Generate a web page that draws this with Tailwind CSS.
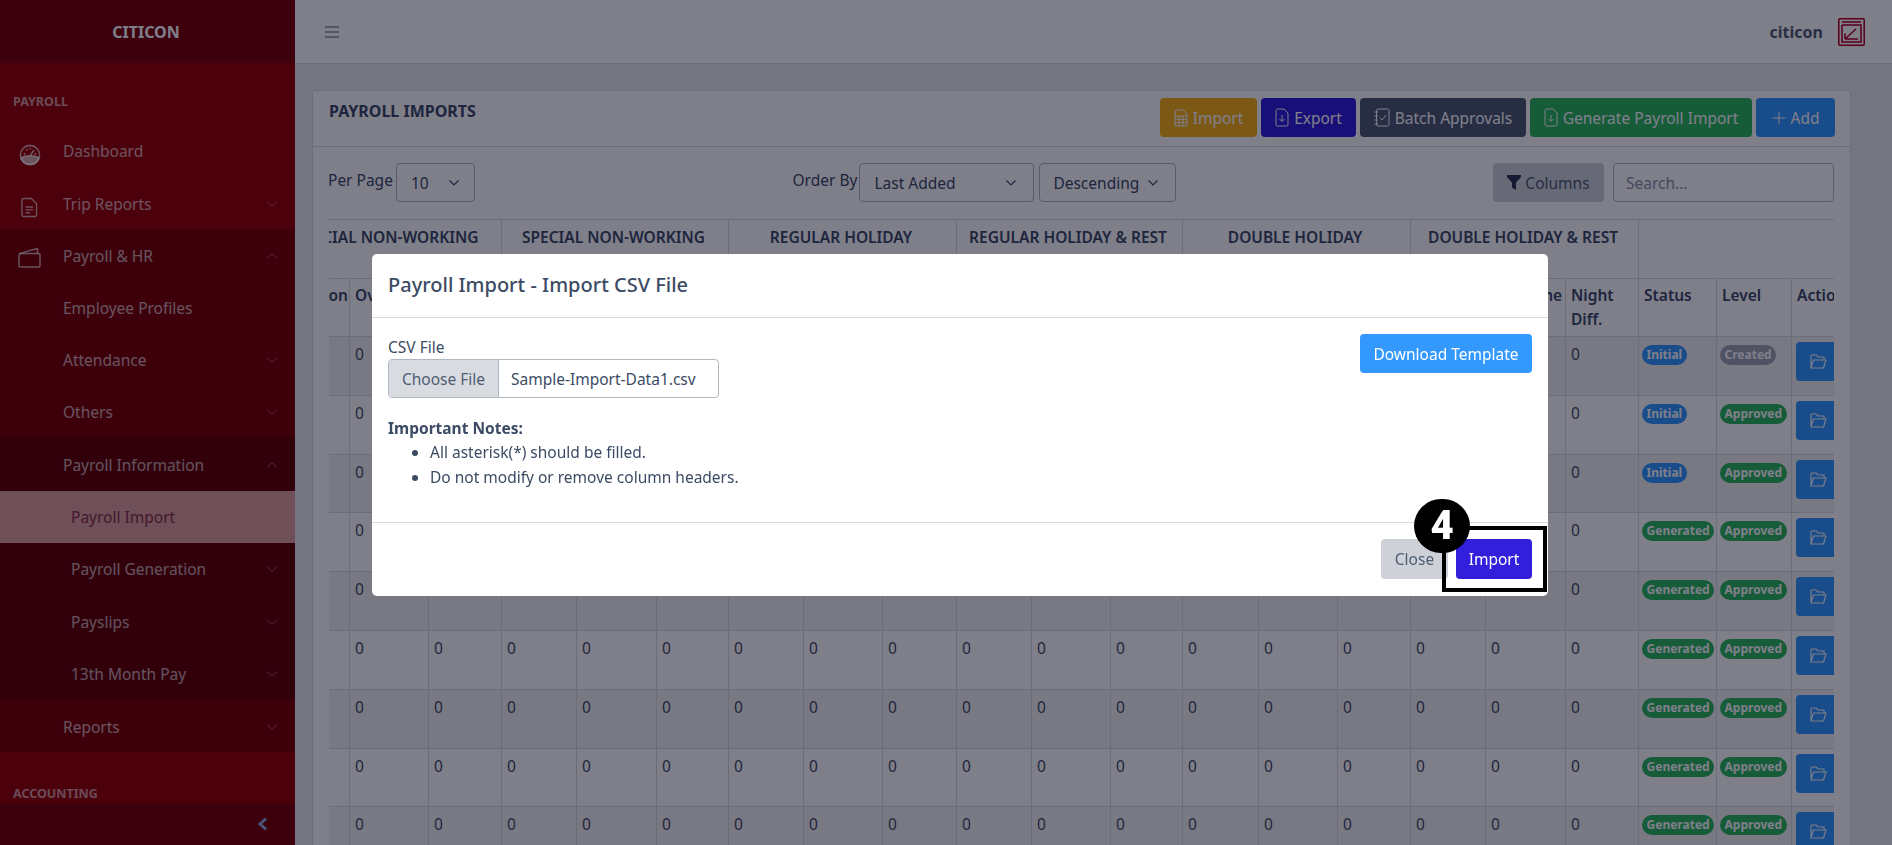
<!DOCTYPE html>
<html lang="en">
<head>
<meta charset="utf-8">
<title>Payroll Imports</title>
<script src="https://cdn.jsdelivr.net/npm/@tailwindcss/browser@4"></script>
</head>
<body class="font-['Noto_Sans',sans-serif] text-[15.5px] leading-6 text-[#3c4b64] bg-[#ebedef] overflow-hidden">
<div class="flex h-[845px] w-[1892px] overflow-hidden">

  <!-- Sidebar -->
  <aside class="w-[295px] shrink-0 h-full flex flex-col bg-[#990000] text-white/65">
    <div class="h-[63px] shrink-0 bg-[#7a0004] flex items-center justify-center pr-[3px] text-white font-bold text-[16px]">CITICON</div>
    <nav class="flex-1 overflow-hidden flex flex-col">
      <div class="mt-4 h-[45.7px] shrink-0 pl-[13px] flex items-center text-[12.5px] font-bold text-white/60">PAYROLL</div>
      <a class="h-[52.3px] shrink-0 flex items-center">
        <span class="w-[63px] flex justify-center pr-[4px] pt-[8px]"><svg width="22" height="22" viewBox="0 0 22 22" fill="none" stroke="currentColor" stroke-width="1.6"><circle cx="11" cy="11" r="9.6"/><path d="M2 14 C5 11 17 11 20 14 C18.5 18.5 15 20.5 11 20.5 C7 20.5 3.5 18.5 2 14Z" fill="currentColor"/><path d="M11 12 L15 6 M4.8 9.5 L6.5 10.4 M7.5 5 L8.4 6.6 M11 3.8 V5.6 M17.2 9.5 L15.5 10.4"/></svg></span>
        <span>Dashboard</span>
      </a>
      <a class="h-[52.3px] shrink-0 flex items-center pt-px">
        <span class="w-[63px] flex justify-center pr-[4px] pt-[8px]"><svg width="17" height="21" viewBox="0 0 18 22" fill="none" stroke="currentColor" stroke-width="1.5"><path d="M2.5 1.5 H11 L16.5 7 V19 a1.5 1.5 0 0 1 -1.5 1.5 H2.5 A1.5 1.5 0 0 1 1 19 V3 A1.5 1.5 0 0 1 2.5 1.5Z"/><path d="M5 10.5 H13 M5 13.5 H13 M5 16.5 H9.5"/></svg></span>
        <span class="flex-1">Trip Reports</span>
        <svg class="mr-[17px]" width="12" height="12" viewBox="0 0 12 12" fill="none" stroke="currentColor" stroke-width="0.9" opacity="0.6"><path d="M1 3.8 L6 8.2 L11 3.8"/></svg>
      </a>
      <div class="bg-[#7a0000] shrink-0">
        <a class="h-[52.3px] flex items-center pt-px">
          <span class="w-[63px] flex justify-center pr-[4px] pt-[5px]"><svg width="23" height="20" viewBox="0 0 23 20" fill="none" stroke="currentColor" stroke-width="1.5"><rect x="1" y="5.5" width="21" height="13.5" rx="1.5"/><path d="M1.5 6 C8 3.5 15 1.5 19.5 0.8 V5.5"/></svg></span>
          <span class="flex-1">Payroll &amp; HR</span>
          <svg class="mr-[17px]" width="12" height="12" viewBox="0 0 12 12" fill="none" stroke="currentColor" stroke-width="0.9" opacity="0.6"><path d="M1 8.2 L6 3.8 L11 8.2"/></svg>
        </a>
        <a class="h-[52.3px] flex items-center pl-[63px]">Employee Profiles</a>
        <a class="h-[52.3px] flex items-center pl-[63px]">
          <span class="flex-1">Attendance</span>
          <svg class="mr-[17px]" width="12" height="12" viewBox="0 0 12 12" fill="none" stroke="currentColor" stroke-width="0.9" opacity="0.6"><path d="M1 3.8 L6 8.2 L11 3.8"/></svg>
        </a>
        <a class="h-[52.3px] flex items-center pl-[63px]">
          <span class="flex-1">Others</span>
          <svg class="mr-[17px]" width="12" height="12" viewBox="0 0 12 12" fill="none" stroke="currentColor" stroke-width="0.9" opacity="0.6"><path d="M1 3.8 L6 8.2 L11 3.8"/></svg>
        </a>
        <div class="bg-[#620000]">
          <a class="h-[52.3px] flex items-center pl-[63px]">
            <span class="flex-1">Payroll Information</span>
            <svg class="mr-[17px]" width="12" height="12" viewBox="0 0 12 12" fill="none" stroke="currentColor" stroke-width="0.9" opacity="0.6"><path d="M1 8.2 L6 3.8 L11 8.2"/></svg>
          </a>
          <a class="h-[52.3px] flex items-center pl-[71px] bg-[#de9e9a] text-[#8a3048]">Payroll Import</a>
          <a class="h-[52.3px] flex items-center pl-[71px]">
            <span class="flex-1">Payroll Generation</span>
            <svg class="mr-[17px]" width="12" height="12" viewBox="0 0 12 12" fill="none" stroke="currentColor" stroke-width="0.9" opacity="0.6"><path d="M1 3.8 L6 8.2 L11 3.8"/></svg>
          </a>
          <a class="h-[52.3px] flex items-center pl-[71px]">
            <span class="flex-1">Payslips</span>
            <svg class="mr-[17px]" width="12" height="12" viewBox="0 0 12 12" fill="none" stroke="currentColor" stroke-width="0.9" opacity="0.6"><path d="M1 3.8 L6 8.2 L11 3.8"/></svg>
          </a>
          <a class="h-[52.3px] flex items-center pl-[71px]">
            <span class="flex-1">13th Month Pay</span>
            <svg class="mr-[17px]" width="12" height="12" viewBox="0 0 12 12" fill="none" stroke="currentColor" stroke-width="0.9" opacity="0.6"><path d="M1 3.8 L6 8.2 L11 3.8"/></svg>
          </a>
        </div>
        <a class="h-[52.3px] flex items-center pl-[63px] pt-px">
          <span class="flex-1">Reports</span>
          <svg class="mr-[17px]" width="12" height="12" viewBox="0 0 12 12" fill="none" stroke="currentColor" stroke-width="0.9" opacity="0.6"><path d="M1 3.8 L6 8.2 L11 3.8"/></svg>
        </a>
      </div>
      <div class="mt-4 h-[51px] shrink-0 pl-[13px] flex items-center text-[12.5px] font-bold text-white/60">ACCOUNTING</div>
    </nav>
    <div class="h-[42px] shrink-0 bg-[#7a0004] flex items-center justify-end pr-[26px] text-[#8fa8d8]">
      <svg width="12" height="14" viewBox="0 0 12 14" fill="none" stroke="currentColor" stroke-width="3"><path d="M9 1.5 L3 7 L9 12.5"/></svg>
    </div>
  </aside>

  <!-- Main -->
  <div class="flex-1 min-w-0 flex flex-col">
    <header class="h-[64px] shrink-0 bg-white border-b border-[#d8dbe0] flex items-center pl-[29px] pr-[27px]">
      <svg width="16" height="14" viewBox="0 0 16 14" fill="none" stroke="#4f5d73" stroke-width="1.2"><path d="M1 2 H15 M1 7 H15 M1 12 H15"/></svg>
      <div class="ml-auto flex items-center gap-[15px]">
        <span class="font-bold text-[16px] text-[#4f5d73]">citicon</span>
        <svg width="27" height="28" viewBox="0 0 27 28" fill="none" stroke="#b00020" stroke-width="1.5"><rect x="0.8" y="0.8" width="25.4" height="26.4" rx="1"/><path d="M4 4 H23 M4 7 H23 V24 H4 V7 M7 21 L18 11 M7 21 V15.5 M7 21 H20" /></svg>
      </div>
    </header>

    <main class="flex-1 min-h-0 pl-[17px] pr-[41px] pt-[26px]">
      <section class="bg-white border border-[#d8dbe0] rounded-[4px] h-[800px]">
        <div class="h-[56px] border-b border-[#d8dbe0] px-4 flex justify-between items-start">
          <h2 class="font-bold text-[16px] mt-[8px] text-[#3c4b64]">PAYROLL IMPORTS</h2>
          <div class="flex gap-1 mt-[7px] mr-[-1px] text-white">
            <button class="h-[39px] w-[97px] rounded-[4px] bg-[#f9b115] flex items-center justify-center gap-[5px]">
              <svg width="14" height="18" viewBox="0 0 14 18" fill="none" stroke="currentColor" stroke-width="1"><path d="M1 7 V3 A2 2 0 0 1 3 1 H9 L13 5 V7 M1 7 H13 V17 H1 Z M1 10.3 H13 M1 13.6 H13 M5 7 V17 M9 7 V17"/></svg>Import</button>
            <button class="h-[39px] w-[95px] rounded-[4px] bg-[#321fdb] flex items-center justify-center gap-[5px]">
              <svg width="14" height="19" viewBox="0 0 14 19" fill="none" stroke="currentColor" stroke-width="1"><path d="M2.5 1 H9 L13 5 V16.5 A1.5 1.5 0 0 1 11.5 18 H2.5 A1.5 1.5 0 0 1 1 16.5 V2.5 A1.5 1.5 0 0 1 2.5 1Z M7 7 V13 M4.5 11 L7 13.5 L9.5 11"/></svg>Export</button>
            <button class="h-[39px] w-[166px] rounded-[4px] bg-[#4f5d73] flex items-center justify-center gap-[5px]">
              <svg width="16" height="19" viewBox="0 0 16 19" fill="none" stroke="currentColor" stroke-width="1"><rect x="2.5" y="1" width="12.5" height="17" rx="1.5"/><path d="M0.5 4 H4 M0.5 8 H4 M0.5 12 H4 M0.5 16 H4 M6 9.5 L8.2 12 L12 7"/></svg>Batch Approvals</button>
            <button class="h-[39px] w-[222px] rounded-[4px] bg-[#2eb85c] flex items-center justify-center gap-[5px]">
              <svg width="14" height="19" viewBox="0 0 14 19" fill="none" stroke="currentColor" stroke-width="1"><path d="M2.5 1 H9 L13 5 V16.5 A1.5 1.5 0 0 1 11.5 18 H2.5 A1.5 1.5 0 0 1 1 16.5 V2.5 A1.5 1.5 0 0 1 2.5 1Z M7 7 V13 M4.5 11 L7 13.5 L9.5 11"/></svg>Generate Payroll Import</button>
            <button class="h-[39px] w-[79px] rounded-[4px] bg-[#3399ff] flex items-center justify-center gap-[5px]">
              <svg width="14" height="14" viewBox="0 0 14 14" fill="none" stroke="currentColor" stroke-width="1"><path d="M7 0.5 V13.5 M0.5 7 H13.5"/></svg>Add</button>
          </div>
        </div>

        <div class="px-4 pt-[16px]">
          <div class="flex justify-between items-start h-[39px]">
            <div class="flex items-center gap-[3px]">
              <span class="pb-[5px] ml-[-1px]">Per Page</span>
              <div class="h-[39px] w-[79px] border border-[#b1b7c1] rounded-[4px] flex items-center justify-between pl-[14px] pr-[14px] bg-white">
                <span>10</span>
                <svg width="12" height="8" viewBox="0 0 12 8" fill="none" stroke="#3c4b64" stroke-width="1.2"><path d="M1.5 1.5 L6 6 L10.5 1.5"/></svg>
              </div>
            </div>
            <div class="flex items-center gap-[5px] ml-[1px]">
              <span class="pb-[5px] mr-[-3px]">Order By</span>
              <div class="h-[39px] w-[175px] border border-[#b1b7c1] rounded-[4px] flex items-center justify-between pl-[14px] pr-[16px] bg-white">
                <span>Last Added</span>
                <svg width="12" height="8" viewBox="0 0 12 8" fill="none" stroke="#3c4b64" stroke-width="1.2"><path d="M1.5 1.5 L6 6 L10.5 1.5"/></svg>
              </div>
              <div class="h-[39px] w-[137px] border border-[#b1b7c1] rounded-[4px] flex items-center justify-between pl-[13px] pr-[16px] bg-white">
                <span>Descending</span>
                <svg width="12" height="8" viewBox="0 0 12 8" fill="none" stroke="#3c4b64" stroke-width="1.2"><path d="M1.5 1.5 L6 6 L10.5 1.5"/></svg>
              </div>
            </div>
            <div class="flex items-center gap-[9px]">
              <button class="h-[39px] w-[111px] rounded-[4px] bg-[#ced2d8] text-[#4f5d73] flex items-center justify-center gap-[4px]">
                <svg width="14" height="15" viewBox="0 0 14 15" fill="#2b3450"><path d="M0 0 H14 V2 L9 7.5 V15 L5 12.5 V7.5 L0 2 Z"/></svg>Columns</button>
              <div class="h-[39px] w-[221px] border border-[#b1b7c1] rounded-[4px] bg-white flex items-center pl-[12px] text-[#8a93a2]">Search...</div>
            </div>
          </div>

          <div class="mt-[17px] w-[1505px] overflow-hidden">
            <table id="grid" class="table-fixed border-collapse w-[1605px] ml-[-54px] [&_td]:border [&_td]:border-[#d8dbe0] [&_td]:align-top [&_td]:pl-[5px] [&_td]:pt-[5px] [&_td]:text-[#464c63] [&_th]:border [&_th]:border-[#d8dbe0] [&_th]:align-top [&_th]:pl-[5px] [&_th]:pt-[4px] [&_th]:font-semibold [&_th]:text-left">
              <colgroup>
                <col class="w-[74px]"><col class="w-[79px]"><col class="w-[73px]"><col class="w-[75px]"><col class="w-[80px]"><col class="w-[72px]"><col class="w-[75px]"><col class="w-[79px]"><col class="w-[74px]"><col class="w-[75px]"><col class="w-[79px]"><col class="w-[72px]"><col class="w-[76px]"><col class="w-[79px]"><col class="w-[73px]"><col class="w-[75px]"><col class="w-[80px]"><col class="w-[73px]"><col class="w-[78px]"><col class="w-[75px]"><col class="w-[89px]">
              </colgroup>
              <thead>
                <tr class="h-[59px]">
                  <th colspan="3" class="!text-center !pt-[5px] !pl-0 !pr-[3px]">SPECIAL NON-WORKING</th>
                  <th colspan="3" class="!text-center !pt-[5px] !pl-0 !pr-[3px]">SPECIAL NON-WORKING</th>
                  <th colspan="3" class="!text-center !pt-[5px] !pl-0 !pr-[3px]">REGULAR HOLIDAY</th>
                  <th colspan="3" class="!text-center !pt-[5px] !pl-0 !pr-[3px]">REGULAR HOLIDAY &amp; REST</th>
                  <th colspan="3" class="!text-center !pt-[5px] !pl-0 !pr-[3px]">DOUBLE HOLIDAY</th>
                  <th colspan="3" class="!text-center !pt-[5px] !pl-0 !pr-[3px]">DOUBLE HOLIDAY &amp; REST</th>
                  <th colspan="3" class="!border-r-0"></th>
                </tr>
                <tr class="h-[58px]" id="cols"></tr>
              </thead>
              <tbody id="rows"></tbody>
            </table>
          </div>
        </div>
      </section>
    </main>
  </div>
</div>

<!-- Backdrop -->
<div class="fixed inset-0 bg-[#000015]/50"></div>

<!-- Modal -->
<div class="fixed left-[372px] top-[254px] w-[1176px] h-[342px] bg-white rounded-[5px] flex flex-col">
  <div class="h-[64px] shrink-0 border-b border-[#d8dbe0] px-4 pb-[2px] flex items-center text-[20px] font-medium text-[#3c4b64]">Payroll Import - Import CSV File</div>
  <div class="h-[205px] shrink-0 border-b border-[#d8dbe0] pl-4 pr-4 pt-[17px] flex justify-between items-start">
    <div>
      <div>CSV File</div>
      <div class="h-[39px] w-[331px] border border-[#b1b7c1] rounded-[4px] flex items-center overflow-hidden">
        <span class="h-full w-[110px] bg-[#d8dbe0] border-r border-[#b1b7c1] flex items-center justify-center text-[#4f5d73]">Choose File</span>
        <span class="pl-[12px]">Sample-Import-Data1.csv</span>
      </div>
      <div class="mt-[18px] font-bold">Important Notes:</div>
      <ul class="list-disc pl-[42px]">
        <li class="h-[25px]">All asterisk(*) should be filled.</li>
        <li class="h-[25px]">Do not modify or remove column headers.</li>
      </ul>
    </div>
    <button class="mt-[-1px] h-[39px] w-[172px] rounded-[4px] bg-[#3399ff] text-white">Download Template</button>
  </div>
  <div class="flex-1 flex justify-end gap-2 px-4 pt-[16px]">
    <button class="h-[40px] w-[67px] rounded-[4px] bg-[#ced2d8] text-[#4f5d73]">Close</button>
    <button class="h-[40px] w-[76px] rounded-[4px] bg-[#321fdb] text-white">Import</button>
  </div>
</div>

<!-- Annotation -->
<div class="fixed left-[1442px] top-[526px] w-[105px] h-[66px] border-[4px] border-black"></div>
<div class="fixed left-[1414px] top-[499px] w-[56px] h-[54px] rounded-full bg-black text-white flex items-center justify-center font-['Roboto',sans-serif] font-black text-[40px] leading-none">4</div>

<script>
  var heads = ['Duration','Overtime','Night Diff.','Duration','Overtime','Night Diff.','Duration','Overtime','Night Diff.','Duration','Overtime','Night Diff.','Duration','Overtime','Night Diff.','Duration','Overtime','Night Diff.','Status','Level','Action'];
  document.getElementById('cols').innerHTML = heads.map(function (h, i) {
    return i === 0 ? '<th class="!text-right !pr-[3px]">' + h + '</th>' : '<th>' + h + '</th>';
  }).join('');
  var blue = 'inline-flex items-center h-[20px] px-[4.5px] ml-[-2px] -translate-y-px rounded-full text-[12px] font-bold text-white bg-[#3399ff]';
  var green = 'inline-flex items-center h-[20px] px-[4.5px] ml-[-2px] -translate-y-px rounded-full text-[12px] font-bold text-white bg-[#2eb85c]';
  var grey = 'inline-flex items-center h-[20px] px-[4.5px] ml-[-2px] -translate-y-px rounded-full text-[12px] font-bold text-white bg-[#9da5b1]';
  var folder = '<button class="w-[60px] h-[39px] rounded-[4px] bg-[#3399ff] text-white flex items-center pl-[14px] ml-[-1px]"><svg width="17" height="15" viewBox="0 0 17 15" fill="none" stroke="currentColor" stroke-width="1.1"><path d="M1 13.5 V2 A1 1 0 0 1 2 1 H6 L8 3 H14 V6 M1 13.5 L3.5 6 H16 L13.5 14 H1 Z"/></svg></button>';
  var html = '';
  for (var r = 0; r < 9; r++) {
    var status = r < 3 ? '<span class="' + blue + '">Initial</span>' : '<span class="' + green + '">Generated</span>';
    var level = r === 0 ? '<span class="' + grey + '">Created</span>' : '<span class="' + green + '">Approved</span>';
    html += '<tr class="h-[58.8px] ' + (r % 2 === 0 ? 'bg-[#000015]/5' : '') + '">';
    for (var c = 0; c < 18; c++) html += '<td>0</td>';
    html += '<td>' + status + '</td><td>' + level + '</td><td>' + folder + '</td></tr>';
  }
  document.getElementById('rows').innerHTML = html;
</script>
</body>
</html>
